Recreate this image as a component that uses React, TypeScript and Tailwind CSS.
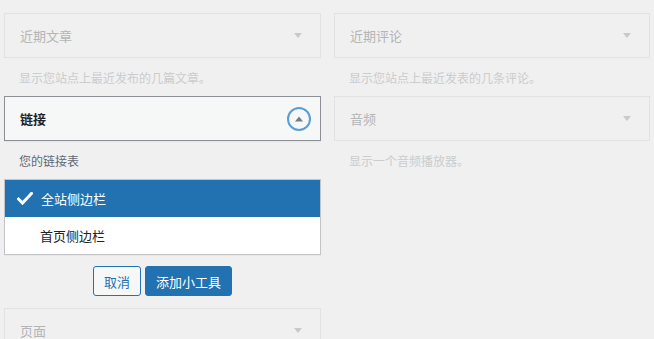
import React from "react";

const font = { fontFamily: '"Noto Sans CJK SC", "Noto Sans", sans-serif' };

function Arrow() {
  return (
    <svg width="10" height="6" viewBox="0 0 10 6" className="block">
      <polygon points="1,0 9,0 5,5" fill="#c9c9c9" />
    </svg>
  );
}

function FadedCard({ title, desc }: { title: string; desc: string }) {
  return (
    <div>
      <div className="h-[45px] border border-[#e2e2e3] bg-[#f0f0f1] flex items-center justify-between pl-[15px] pr-[17px]">
        <span className="text-[13px] leading-none text-[#b4b5b7]">{title}</span>
        <Arrow />
      </div>
      <div className="h-[38px] pt-[12px] pl-[15px] text-[12px] leading-[16px] text-[#cbcccd]">{desc}</div>
    </div>
  );
}

export default function App() {
  return (
    <div className="w-[654px] h-[339px] bg-[#f0f0f1] overflow-hidden pl-[4px] pt-[13px] flex gap-[13px]" style={font}>
      <div className="w-[317px] flex flex-col">
        <FadedCard title="近期文章" desc="显示您站点上最近发布的几篇文章。" />
        <div>
          <div className="h-[45px] border border-[#8c8f94] bg-[#f6f7f7] shadow-[0_1px_1px_rgba(0,0,0,0.04)] flex items-center justify-between pl-[15px] pr-[9px]">
            <span className="text-[13px] leading-none font-bold text-[#1d2327]">链接</span>
            <div className="w-[24px] h-[24px] rounded-full border-2 border-[#5b9dd9] flex items-center justify-center">
              <svg width="8" height="6" viewBox="0 0 8 6" className="block">
                <polygon points="4,0.5 8,5.5 0,5.5" fill="#787c82" />
              </svg>
            </div>
          </div>
          <div className="h-[38px] pt-[12px] pl-[15px] text-[12px] leading-[16px] text-[#646970]">您的链接表</div>
          <div className="border border-[#c3c4c7] bg-white shadow-[0_1px_1px_rgba(0,0,0,0.04)]">
            <div className="h-[37px] bg-[#2271b1] flex items-center text-white">
              <svg width="16" height="14" viewBox="0 0 16 14" className="ml-[12px] mr-[8px]">
                <polyline points="1.5,7 5.5,11 14.5,1.5" fill="none" stroke="#ffffff" strokeWidth="3" strokeLinecap="square" />
              </svg>
              <span className="text-[13px] leading-none">全站侧边栏</span>
            </div>
            <div className="h-[37px] flex items-center pl-[35px] text-[13px] leading-none text-[#1d2327]">首页侧边栏</div>
          </div>
          <div className="flex justify-center gap-[4px] mt-[11px]">
            <button className="h-[30px] w-[48px] rounded-[3px] border border-[#2271b1] bg-[#f6f7f7] text-[#2271b1] text-[13px] leading-none">取消</button>
            <button className="h-[30px] w-[87px] rounded-[3px] border border-[#2271b1] bg-[#2271b1] text-white text-[13px] leading-none">添加小工具</button>
          </div>
          <div className="mt-[12px]">
            <FadedCard title="页面" desc="" />
          </div>
        </div>
      </div>
      <div className="w-[316px] flex flex-col">
        <FadedCard title="近期评论" desc="显示您站点上最近发表的几条评论。" />
        <FadedCard title="音频" desc="显示一个音频播放器。" />
      </div>
    </div>
  );
}
